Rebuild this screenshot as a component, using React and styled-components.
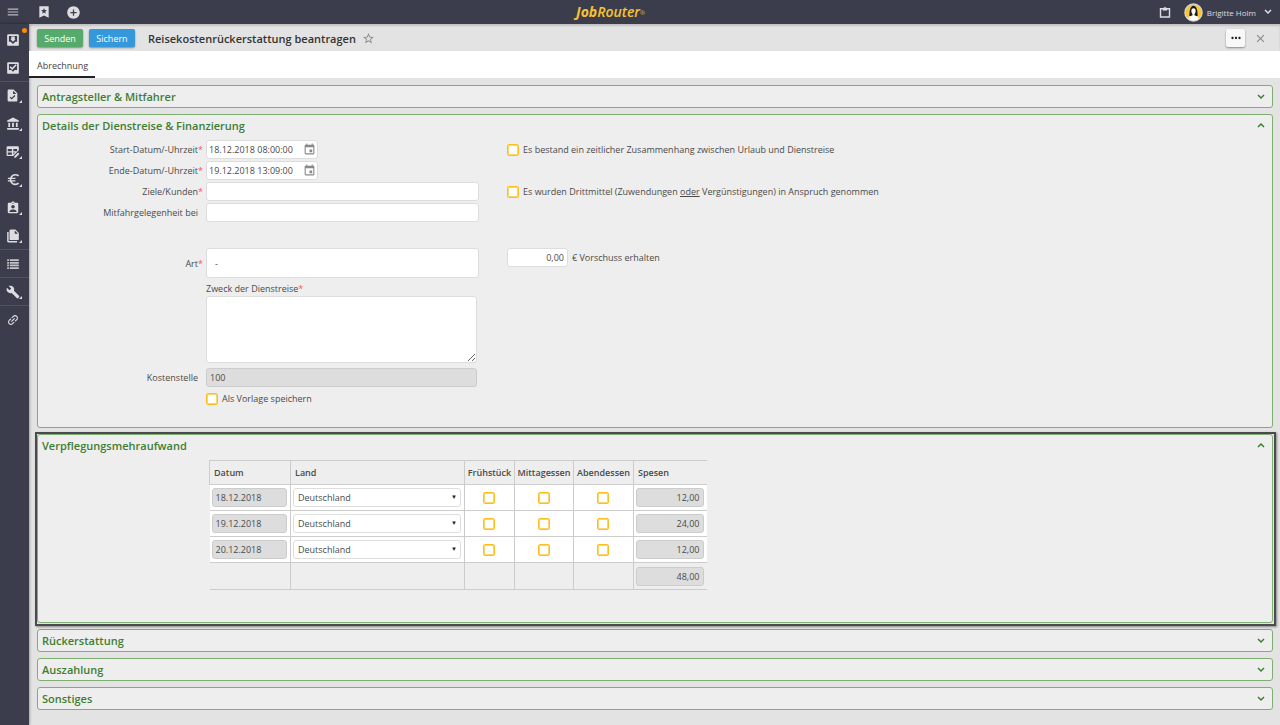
import React from 'react';
import styled, { createGlobalStyle, css } from 'styled-components';
import { MdAddCircle, MdAccountBalance, MdEuroSymbol, MdAssignmentInd, MdBuild, MdLink, MdMenu, MdStarBorder, MdClose, MdMoreHoriz, MdEvent } from 'react-icons/md';

const dark = '#3c3d4c';
const green = '#3f7d32';
const iconGray = '#dedee2';

const meals = ['Frühstück', 'Mittagessen', 'Abendessen'];
const days = [
    { date: '18.12.2018', amount: '12,00' },
    { date: '19.12.2018', amount: '24,00' },
    { date: '20.12.2018', amount: '12,00' }
];

//Icons
function Chevron(props){
    return (<svg width="8" height="8" viewBox="0 0 8 8" fill="none" stroke="currentColor" strokeWidth="1.5" aria-hidden="true">
                <path d={props.up ? 'M1 5l3-3 3 3' : 'M1 2l3 3 3-3'}/>
            </svg>);
}

function BookmarkStarIcon(){
    return (<svg width="14" height="14" viewBox="0 0 24 24" fill="currentColor" aria-hidden="true">
                <path fillRule="evenodd" d="M4 2h16v20l-8-4-8 4zM12 5l-1.4 3.600-3.600.3 2.800 2.500-.9 3.600 3.100-2 3.100 2-.9-3.600 2.800-2.500-3.600-.3z"/>
            </svg>);
}

function InboxIcon(){
    return (<svg width="14" height="14" viewBox="0 0 24 24" fill="currentColor" aria-hidden="true">
                <path fillRule="evenodd" d="M4 2h16a2 2 0 0 1 2 2v16a2 2 0 0 1-2 2H4a2 2 0 0 1-2-2V4a2 2 0 0 1 2-2zM5 5v10h3l4 4 4-4h3V5z"/>
                <path d="M9 6h6v4.500h1.500L12 15l-4.500-4.500H9z"/>
            </svg>);
}

function InboxCheckIcon(){
    return (<svg width="14" height="14" viewBox="0 0 24 24" fill="currentColor" aria-hidden="true">
                <path fillRule="evenodd" d="M4 2h16a2 2 0 0 1 2 2v16a2 2 0 0 1-2 2H4a2 2 0 0 1-2-2V4a2 2 0 0 1 2-2zM5 5v10.500h4l3 3 3-3h4V5z"/>
                <path d="M7 10l3.500 3.500L17.500 6.500" fill="none" stroke="currentColor" strokeWidth="2.600"/>
            </svg>);
}

function FileCheckIcon(){
    return (<svg width="13" height="13" viewBox="0 0 24 24" fill="currentColor" aria-hidden="true">
                <path fillRule="evenodd" d="M5 1h9l7 7v13a2 2 0 0 1-2 2H5a2 2 0 0 1-2-2V3a2 2 0 0 1 2-2zM13 3v6h6z"/>
                <path d="M7.500 15l3 3 6-6" fill="none" stroke={dark} strokeWidth="2.200"/>
            </svg>);
}

function TableEditIcon(){
    return (<svg width="14" height="14" viewBox="0 0 24 24" fill="currentColor" aria-hidden="true">
                <path fillRule="evenodd" d="M3 2h17a2 2 0 0 1 2 2v5l-9 9v1H3a2 2 0 0 1-2-2V4a2 2 0 0 1 2-2zM3 7v3.500h7V7zM12.500 7v3.500H19V7zM3 13v3.500h7V13zM12.500 13v3l3-3z"/>
                <path d="M14 19.500l6.500-6.500 2.500 2.500L16.500 22H14z"/>
            </svg>);
}

function CopyIcon(){
    return (<svg width="14" height="14" viewBox="0 0 24 24" fill="currentColor" aria-hidden="true">
                <path fillRule="evenodd" d="M8 1h8l6 6v10a2 2 0 0 1-2 2H8a2 2 0 0 1-2-2V3a2 2 0 0 1 2-2zM15 2.500V8h5.500z"/>
                <path d="M2 5h2.500v15.500H19V23H4a2 2 0 0 1-2-2z"/>
            </svg>);
}

function ListIcon(){
    return (<svg width="14" height="14" viewBox="0 0 24 24" fill="#c4c4cb" aria-hidden="true">
                <path d="M2 4h3v3H2zM2 8.500h3v3H2zM2 13h3v3H2zM2 17.500h3v3H2zM6.500 4H22v3H6.500zM6.500 8.500H22v3H6.500zM6.500 13H22v3H6.500zM6.500 17.500H22v3H6.500z"/>
            </svg>);
}

function TiltedLink(){
    return (<svg width="14" height="14" viewBox="0 0 24 24" aria-hidden="true">
                <g transform="rotate(-45 12 12)"><MdLink size={24}/></g>
            </svg>);
}

function ClipboardIcon(){
    return (<svg width="12" height="12" viewBox="0 0 24 24" fill="none" stroke="currentColor" strokeWidth="2.800" aria-hidden="true">
                <path d="M3 5.500h18V22H3z"/>
                <path d="M8 8.500V4.500h2a2 2 0 0 1 4 0h2v4z" fill="currentColor" strokeWidth="1"/>
            </svg>);
}

function AvatarIcon(){
    return (<svg width="19" height="19" viewBox="0 0 40 40" aria-hidden="true">
                <circle cx="20" cy="20" r="18" fill="#fbc62f" stroke="#d6d3cc" strokeWidth="3"/>
                <path d="M11 27c1-5 0-10 2-14 1-4 4-7 7-7s6 3 7 7c2 4 1 9 2 14l-5 2h-8z" fill="#1b1b1d"/>
                <path d="M20 11c3 0 4.500 2 4.500 6 0 3-1 5-2.500 6v3l7 3c1 1 1.500 3 1.500 4-6 5-15 5-21 0 0-1 .5-3 1.500-4l7-3v-3c-1.500-1-2.500-3-2.500-6 0-4 1.500-6 4.500-6z" fill="#fff"/>
            </svg>);
}

const navItems = [
    { label: 'Eingang', icon: <InboxIcon/>, dot: true },
    { label: 'Erledigt', icon: <InboxCheckIcon/> },
    { label: 'Vorgänge', icon: <FileCheckIcon/>, more: true, line: true },
    { label: 'Archive', icon: <MdAccountBalance size={14}/>, more: true },
    { label: 'Tabellen', icon: <TableEditIcon/>, more: true },
    { label: 'Finanzen', icon: <MdEuroSymbol size={15}/>, more: true },
    { label: 'Personal', icon: <MdAssignmentInd size={14}/>, more: true },
    { label: 'Dokumente', icon: <CopyIcon/>, more: true },
    { label: 'Listen', icon: <ListIcon/>, line: true },
    { label: 'Werkzeuge', icon: <MdBuild size={14}/>, more: true, line: true },
    { label: 'Verknüpfungen', icon: <TiltedLink/>, line: true }
];

function Panel(props){
    return (<PanelBox $marked={props.marked}>
                <PanelHead type="button" aria-expanded={!!props.children}>
                    <PanelTitle>{props.title}</PanelTitle>
                    <Chevron up={!!props.children}/>
                </PanelHead>
                {props.children}
            </PanelBox>);
}

function Field(props){
    return (<FieldRow>
                <FieldLabel htmlFor={props.id}>{props.label}<Star>{props.required ? '*' : ''}</Star></FieldLabel>
                {props.children}
            </FieldRow>);
}

function DateField(props){
    return (<Field id={props.id} label={props.label} required>
                <DateBox>
                    <DateInput id={props.id} defaultValue={props.value}/>
                    <MdEvent size={13}/>
                </DateBox>
            </Field>);
}

function App(){
    return (<Page>
                <GlobalStyle/>
                <TopBar>
                    <TopGroup>
                        <MenuButton type="button" aria-label="Menü"><MdMenu size={14}/></MenuButton>
                        <IconButton type="button" aria-label="Lesezeichen"><BookmarkStarIcon/></IconButton>
                        <IconButton type="button" aria-label="Neu"><MdAddCircle size={15}/></IconButton>
                    </TopGroup>
                    <Logo>Job<span>Router</span><sup>®</sup></Logo>
                    <UserGroup>
                        <IconButton type="button" aria-label="Aufgaben"><ClipboardIcon/></IconButton>
                        <UserButton type="button">
                            <AvatarIcon/>
                            <UserName>Brigitte Holm</UserName>
                            <Chevron/>
                        </UserButton>
                    </UserGroup>
                </TopBar>
                <Body>
                    <SideBar>
                        {navItems.map(item => (
                            <NavItem key={item.label} href="#" aria-label={item.label} $line={item.line} $more={item.more}>
                                {item.icon}
                                {item.dot && <Dot/>}
                            </NavItem>
                        ))}
                    </SideBar>
                    <Main>
                        <Header>
                            <ActionButton type="button" $color="#56aa6c">Senden</ActionButton>
                            <ActionButton type="button" $color="#3498db">Sichern</ActionButton>
                            <Title>Reisekostenrückerstattung beantragen</Title>
                            <PlainButton type="button" aria-label="Favorit"><MdStarBorder size={13}/></PlainButton>
                            <HeaderEnd>
                                <MoreButton type="button" aria-label="Mehr"><MdMoreHoriz size={14}/></MoreButton>
                                <PlainButton type="button" aria-label="Schließen"><MdClose size={13}/></PlainButton>
                            </HeaderEnd>
                        </Header>
                        <Tabs>
                            <Tab href="#">Abrechnung</Tab>
                        </Tabs>
                        <Content>
                            <Panel title="Antragsteller & Mitfahrer"/>
                            <Panel title="Details der Dienstreise & Finanzierung">
                                <Details/>
                            </Panel>
                            <Panel title="Verpflegungsmehraufwand" marked>
                                <Expenses/>
                            </Panel>
                            <Panel title="Rückerstattung"/>
                            <Panel title="Auszahlung"/>
                            <Panel title="Sonstiges"/>
                        </Content>
                    </Main>
                </Body>
            </Page>);
}

function Details(){
    return (<DetailGrid>
                <FieldColumn>
                    <DateField id="start" label="Start-Datum/-Uhrzeit" value="18.12.2018 08:00:00"/>
                    <DateField id="end" label="Ende-Datum/-Uhrzeit" value="19.12.2018 13:09:00"/>
                    <Field id="goal" label="Ziele/Kunden" required><TextInput id="goal"/></Field>
                    <Field id="ride" label="Mitfahrgelegenheit bei"><TextInput id="ride"/></Field>
                    <Spacer/>
                    <Field id="kind" label="Art" required><KindInput id="kind" defaultValue="-"/></Field>
                    <PurposeBlock>
                        <label htmlFor="purpose">Zweck der Dienstreise<Star>*</Star></label>
                        <TextArea id="purpose"/>
                    </PurposeBlock>
                    <Field id="cost" label="Kostenstelle"><CostInput id="cost" readOnly value="100"/></Field>
                    <TemplateLabel><CheckBox type="checkbox"/>Als Vorlage speichern</TemplateLabel>
                </FieldColumn>
                <OptionColumn>
                    <CheckLabel><CheckBox type="checkbox"/>Es bestand ein zeitlicher Zusammenhang zwischen Urlaub und Dienstreise</CheckLabel>
                    <CheckLabel><CheckBox type="checkbox"/><span>Es wurden Drittmittel (Zuwendungen <u>oder</u> Vergünstigungen) in Anspruch genommen</span></CheckLabel>
                    <AdvanceRow>
                        <AdvanceInput id="advance" defaultValue="0,00"/>
                        <label htmlFor="advance">€ Vorschuss erhalten</label>
                    </AdvanceRow>
                </OptionColumn>
            </DetailGrid>);
}

function Expenses(){
    return (<Table>
                <colgroup>
                    <col width="81"/>
                    <col width="174"/>
                    <col width="50"/>
                    <col width="59"/>
                    <col width="60"/>
                    <col width="73"/>
                </colgroup>
                <thead>
                    <tr>
                        <th>Datum</th>
                        <th>Land</th>
                        {meals.map(meal => <MealHead key={meal}>{meal}</MealHead>)}
                        <th>Spesen</th>
                    </tr>
                </thead>
                <tbody>
                    {days.map(day => (
                        <tr key={day.date}>
                            <td><CellInput readOnly value={day.date} aria-label="Datum"/></td>
                            <td>
                                <SelectBox>
                                    <Select aria-label={'Land ' + day.date}><option>Deutschland</option></Select>
                                    <span aria-hidden="true">▼</span>
                                </SelectBox>
                            </td>
                            {meals.map(meal => <CheckCell key={meal}><CheckBox type="checkbox" aria-label={meal + ' ' + day.date}/></CheckCell>)}
                            <td><CellInput readOnly $right value={day.amount} aria-label={'Spesen ' + day.date}/></td>
                        </tr>
                    ))}
                </tbody>
                <tfoot>
                    <tr>
                        <td/><td/><td/><td/><td/>
                        <td><CellInput readOnly $right value="48,00" aria-label="Summe"/></td>
                    </tr>
                </tfoot>
            </Table>);
}

const GlobalStyle = createGlobalStyle`
    * {
        box-sizing: border-box;
    }

    body {
        margin: 0;
        background: #e3e3e3;
        color: #4a4a4a;
        font-family: "Open Sans", sans-serif;
        font-size: 9px;
        line-height: 13px;
    }

    button, input, select, textarea {
        font: inherit;
        color: inherit;
    }

    button {
        border: 0;
        padding: 0;
        background: none;
    }

    svg {
        display: block;
        flex: none;
    }
`;

const Page = styled.div`
    min-height: 100vh;
    display: flex;
    flex-direction: column;
`;

const TopBar = styled.header`
    height: 24px;
    background: ${dark};
    color: ${iconGray};
    display: grid;
    grid-template-columns: 45% auto 1fr;
    align-items: center;
`;

const TopGroup = styled.div`
    display: flex;
    align-items: center;
    gap: 15px;
`;

const IconButton = styled.button`
    display: flex;
    align-items: center;
    justify-content: center;
`;

const MenuButton = styled(IconButton)`
    width: 22px;
    padding-left: 4px;
    color: #b9b9c2;
`;

const Logo = styled.div`
    color: #f7c331;
    font-size: 14px;
    font-style: italic;
    font-weight: 700;
    line-height: 24px;

    span {
        font-weight: 600;
    }

    sup {
        font-size: 6px;
        line-height: 1;
        vertical-align: middle;
        opacity: 0.7;
    }
`;

const UserGroup = styled.div`
    display: flex;
    align-items: center;
    justify-content: flex-end;
    gap: 13px;
    padding-right: 8px;
`;

const UserButton = styled(IconButton)`
    gap: 4px;
`;

const UserName = styled.span`
    margin-right: 4px;
    font-size: 8px;
`;

const Body = styled.div`
    flex: 1;
    display: flex;
`;

const SideBar = styled.nav`
    width: 29px;
    flex: none;
    background: ${dark};
    padding-top: 1px;
    box-shadow: 0 0 3px #00000080;
`;

const NavItem = styled.a`
    position: relative;
    height: 28px;
    display: flex;
    align-items: center;
    padding-left: 6px;
    color: ${iconGray};
    border-top: 1px solid ${props => props.$line ? '#515263' : 'transparent'};

    ${props => props.$more && css`
        &::after {
            content: '';
            position: absolute;
            left: 19px;
            bottom: 6px;
            border-left: 3px solid transparent;
            border-bottom: 3px solid ${iconGray};
        }
    `}
`;

const Dot = styled.span`
    position: absolute;
    top: 2px;
    right: 2px;
    width: 5px;
    height: 5px;
    border-radius: 50%;
    background: #ff8a00;
`;

const Main = styled.main`
    flex: 1;
    min-width: 0;
`;

const Header = styled.div`
    height: 27px;
    display: flex;
    align-items: center;
    padding: 1px 13px 0 8px;
    box-shadow: inset 0 2px 2px #00000026;
`;

const ActionButton = styled.button`
    height: 18px;
    width: 46px;
    margin-right: 6px;
    border-radius: 2px;
    color: white;
    background: ${props => props.$color};
    box-shadow: 0 1px 2px #00000066;
`;

const Title = styled.h1`
    margin: 0 6px 0 7px;
    color: #333;
    font-size: 11px;
    font-weight: 600;
`;

const HeaderEnd = styled.div`
    margin-left: auto;
    display: flex;
    align-items: center;
    gap: 9px;
`;

const PlainButton = styled.button`
    color: #888;
`;

const MoreButton = styled.button`
    width: 19px;
    height: 18px;
    display: flex;
    align-items: center;
    justify-content: center;
    border-radius: 2px;
    color: #222;
    background: #f8f8f8;
    box-shadow: 0 1px 2px #00000066;
`;

const Tabs = styled.nav`
    height: 27px;
    display: flex;
    background: white;
`;

const Tab = styled.a`
    padding: 0 7px 0 8px;
    color: #444;
    line-height: 29px;
    text-decoration: none;
    border-bottom: 2px solid #222;
`;

const Content = styled.div`
    padding: 7px 7px 15px 8px;
    display: flex;
    flex-direction: column;
    gap: 6px;
`;

const PanelBox = styled.section`
    position: relative;
    border: 1px solid #7fae72;
    border-radius: 3px;
    background: #eee;

    ${props => props.$marked && css`
        &::after {
            content: '';
            position: absolute;
            inset: -3px -4px -4px -3px;
            border: 2px solid #4b4b4f;
            box-shadow: 1px 1px 2px #00000066;
            pointer-events: none;
        }
    `}
`;

const PanelHead = styled.button`
    width: 100%;
    height: 21px;
    display: flex;
    align-items: center;
    justify-content: space-between;
    padding: 0 7px 0 4px;
    color: ${green};
`;

const PanelTitle = styled.span`
    font-size: 11px;
    font-weight: 600;
`;

const DetailGrid = styled.div`
    display: flex;
    gap: 28px;
    padding: 4px 0 19px 30px;
`;

const FieldColumn = styled.div`
    width: 411px;
    display: flex;
    flex-direction: column;
    gap: 2px;
`;

const FieldRow = styled.div`
    display: flex;
    align-items: center;
`;

const FieldLabel = styled.label`
    width: 138px;
    flex: none;
    display: flex;
    justify-content: flex-end;
`;

const Star = styled.span`
    min-width: 8px;
    color: #f55;
`;

const inputBox = css`
    width: 100%;
    height: 19px;
    padding: 0 3px;
    border: 1px solid #ddd;
    border-radius: 3px;
    background: white;
    outline: 0;
`;

const TextInput = styled.input`
    ${inputBox}
`;

const DateBox = styled.div`
    ${inputBox}
    width: 112px;
    padding: 0 1px 0 0;
    display: flex;
    align-items: center;
    color: #888;
`;

const DateInput = styled.input`
    flex: 1;
    min-width: 0;
    padding: 0 2px;
    border: 0;
    background: none;
    color: #4a4a4a;
    outline: 0;
`;

const Spacer = styled.div`
    height: 22px;
`;

const KindInput = styled.input`
    ${inputBox}
    height: 30px;
    padding: 0 8px;
`;

const PurposeBlock = styled.div`
    margin: 2px 2px 3px 138px;
    display: flex;
    flex-direction: column;
    gap: 1px;
`;

const TextArea = styled.textarea`
    ${inputBox}
    height: 67px;
`;

const CostInput = styled.input`
    ${inputBox}
    margin-right: 2px;
    border-color: #ccc;
    background: #ddd;
`;

const CheckBox = styled.input`
    appearance: none;
    width: 12px;
    height: 12px;
    flex: none;
    margin: 0;
    border: 1px solid #fdbf1c;
    border-radius: 2px;
    background: white;
    box-shadow: inset 0 0 0 1px #fdd56b;
`;

const CheckLabel = styled.label`
    height: 19px;
    display: flex;
    align-items: center;
    gap: 4px;
`;

const TemplateLabel = styled(CheckLabel)`
    margin-left: 138px;
`;

const OptionColumn = styled.div`
    display: flex;
    flex-direction: column;
    gap: 23px;
`;

const AdvanceRow = styled.div`
    margin-top: 24px;
    display: flex;
    align-items: center;
    gap: 4px;
`;

const AdvanceInput = styled.input`
    ${inputBox}
    width: 61px;
    text-align: right;
`;

const Table = styled.table`
    margin: 4px 0 32px 171px;
    width: 497px;
    table-layout: fixed;
    border-collapse: collapse;

    th, td {
        border: 1px solid #ccc;
    }

    th:last-child, td:last-child {
        border-right: 0;
    }

    th {
        height: 24px;
        padding: 0 4px;
        font-weight: 600;
        text-align: left;
        white-space: nowrap;
    }

    td {
        height: 26px;
        padding: 0 3px 0 2px;
    }

    td:first-child {
        border-left: 0;
    }

    tbody {
        background: white;
    }

    tfoot td {
        height: 27px;
        border-top-color: #bbb;
    }
`;

const MealHead = styled.th`
    && {
        padding: 0 2px;
        text-align: center;
    }
`;

const CheckCell = styled.td`
    text-align: center;

    input {
        display: block;
        margin: 0 auto;
    }
`;

const CellInput = styled.input`
    ${inputBox}
    display: block;
    border-color: #ccc;
    background: #ddd;
    text-align: ${props => props.$right ? 'right' : 'left'};
`;

const SelectBox = styled.div`
    position: relative;

    span {
        position: absolute;
        right: 4px;
        top: 3px;
        color: #222;
        font-size: 6px;
        pointer-events: none;
    }
`;

const Select = styled.select`
    ${inputBox}
    display: block;
    appearance: none;
    padding: 0 4px;
`;

export default App;
